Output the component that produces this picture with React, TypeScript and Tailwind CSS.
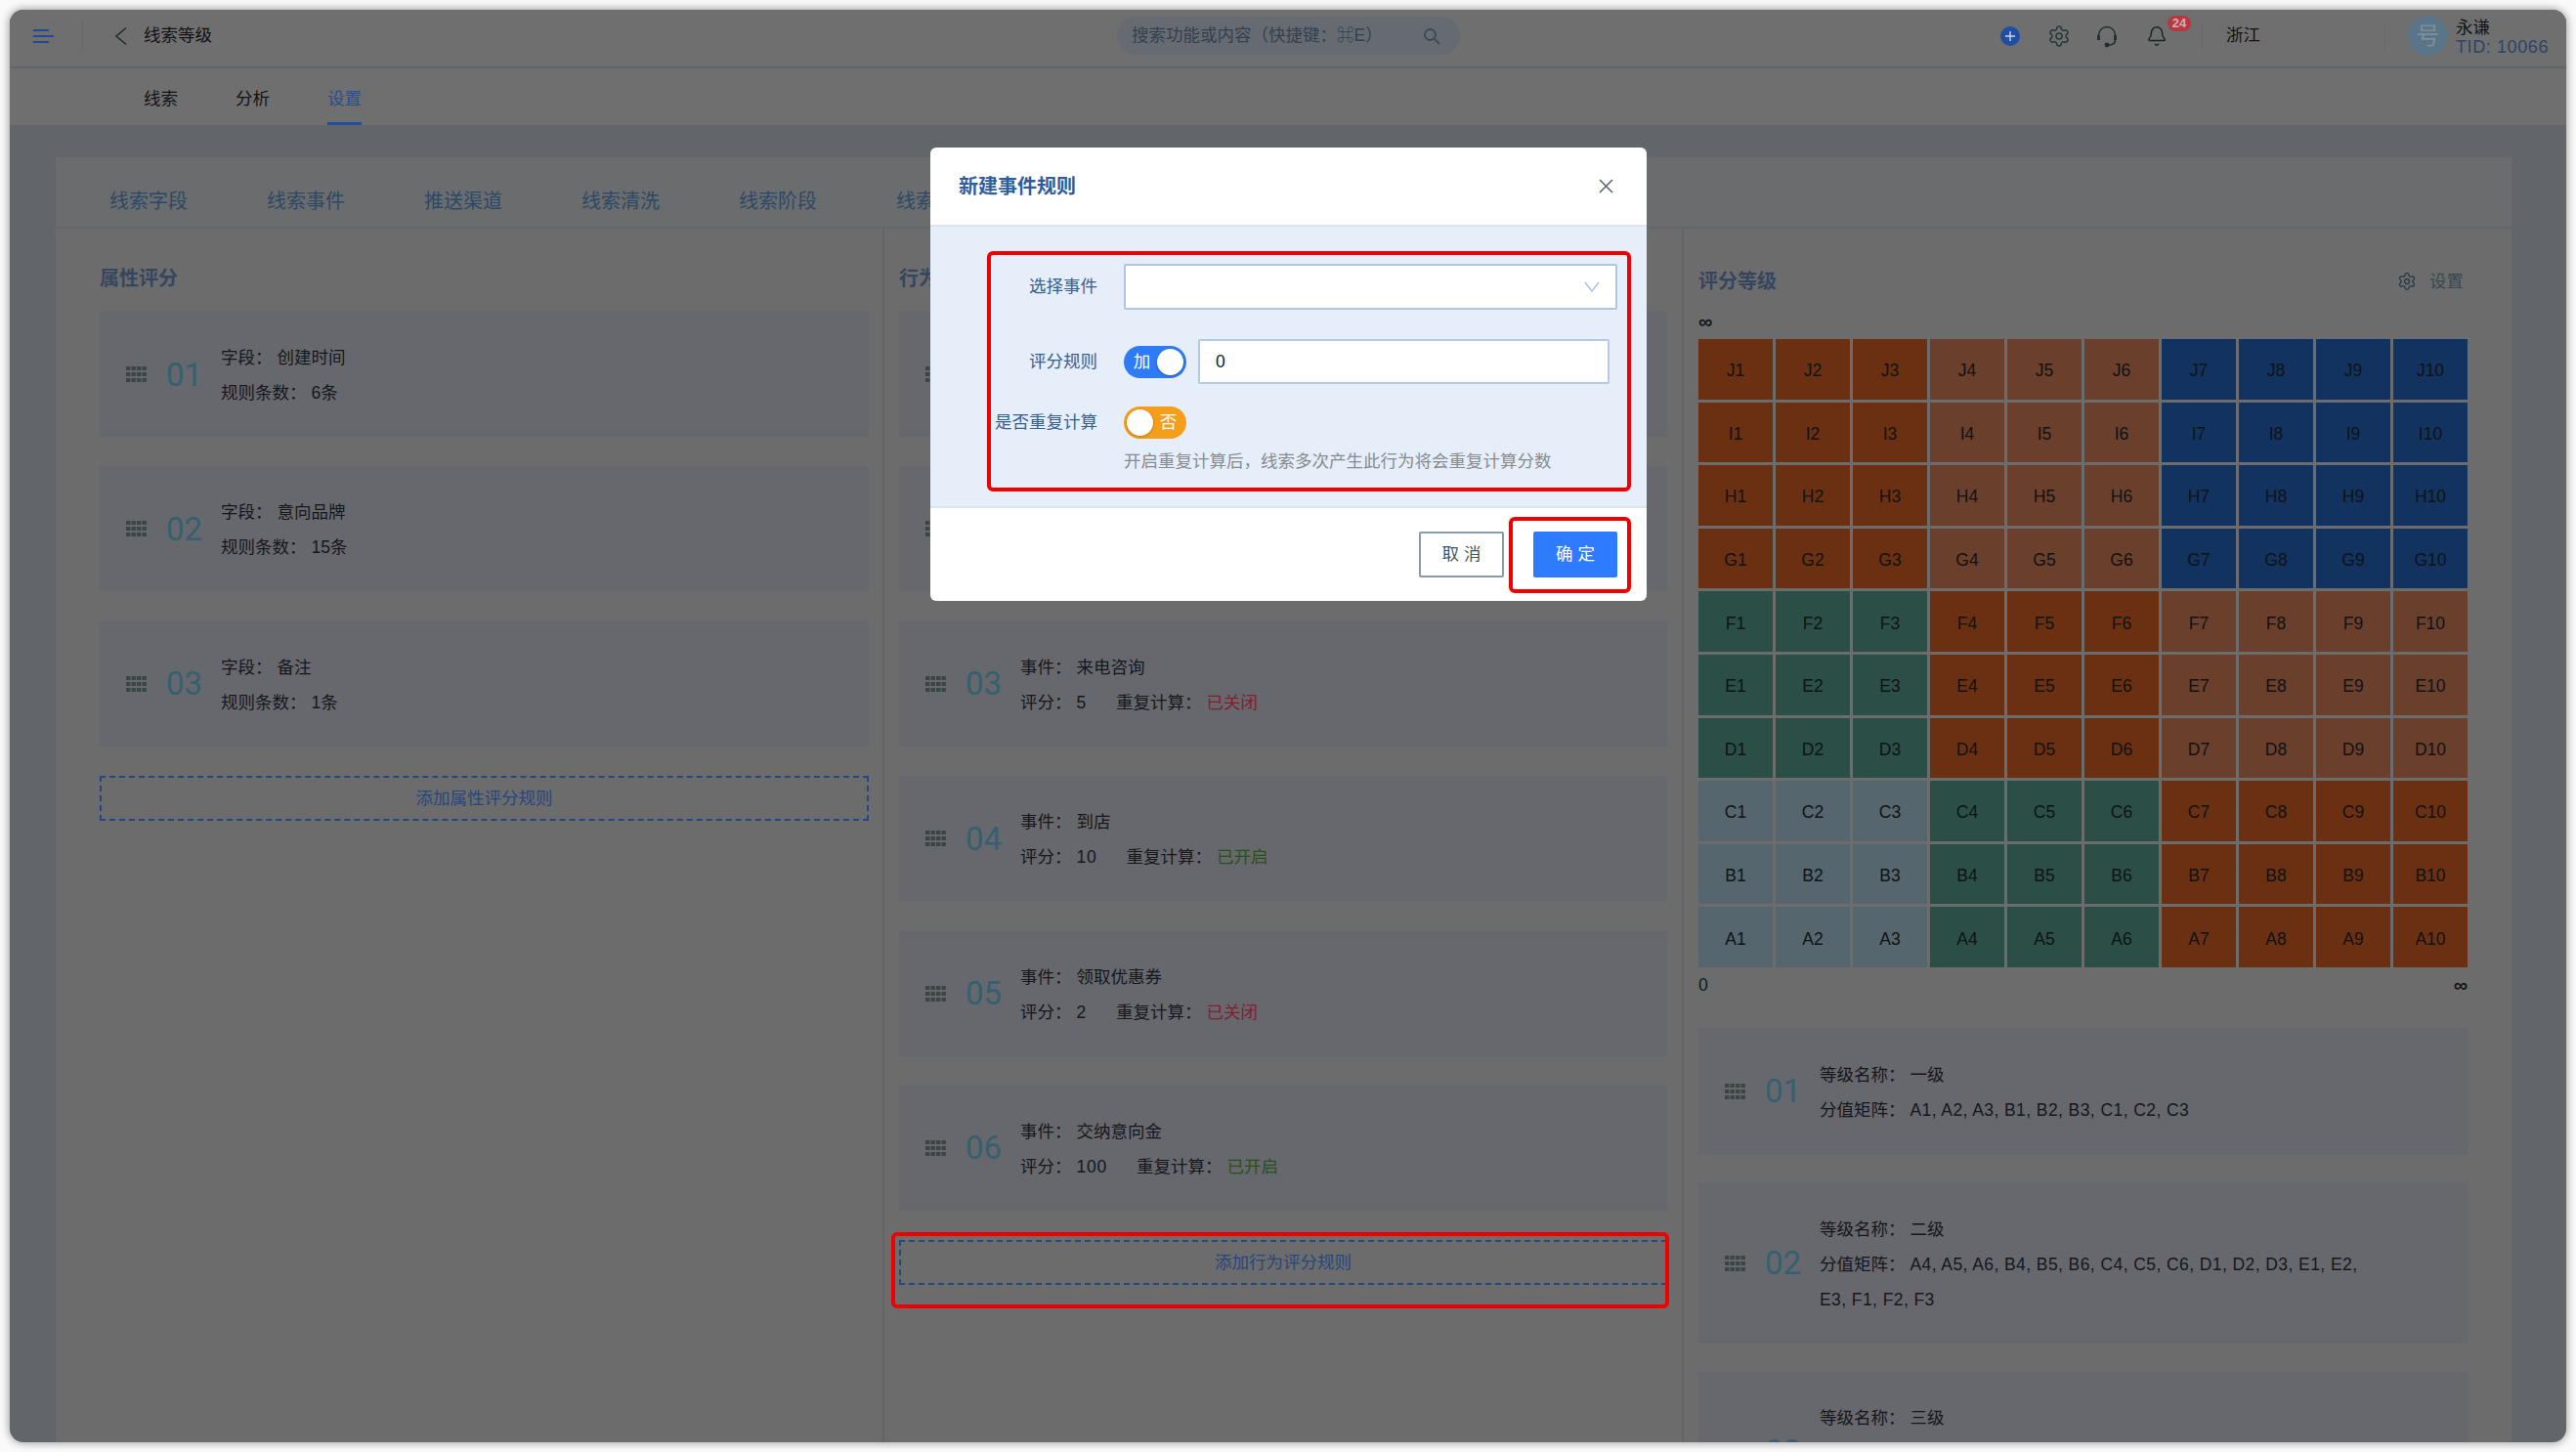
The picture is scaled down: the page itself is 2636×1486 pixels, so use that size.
import { ReactNode } from "react";
import { Bell, Settings } from "lucide-react";

const font = "font-['Liberation_Sans','Noto_Sans_CJK_SC',sans-serif]";

const strong = "bg-[#6b3012]";
const soft = "bg-[#6a3f2c]";
const blue = "bg-[#123360]";
const green = "bg-[#2b4f47]";
const gray = "bg-[#55666f]";

const matrix = [
  { row: "J", colors: [strong, soft, blue] },
  { row: "I", colors: [strong, soft, blue] },
  { row: "H", colors: [strong, soft, blue] },
  { row: "G", colors: [strong, soft, blue] },
  { row: "F", colors: [green, strong, soft] },
  { row: "E", colors: [green, strong, soft] },
  { row: "D", colors: [green, strong, soft] },
  { row: "C", colors: [gray, green, strong] },
  { row: "B", colors: [gray, green, strong] },
  { row: "A", colors: [gray, green, strong] },
];
const columns = [1, 2, 3, 4, 5, 6, 7, 8, 9, 10];

const subTabs = ["线索字段", "线索事件", "推送渠道", "线索清洗", "线索阶段", "线索等级"];

const attrRules = [
  { no: "01", field: "创建时间", count: "6条" },
  { no: "02", field: "意向品牌", count: "15条" },
  { no: "03", field: "备注", count: "1条" },
];

const eventRules = [
  { no: "01", name: "留资", score: "20", on: true },
  { no: "02", name: "预约试驾", score: "10", on: false },
  { no: "03", name: "来电咨询", score: "5", on: false },
  { no: "04", name: "到店", score: "10", on: true },
  { no: "05", name: "领取优惠券", score: "2", on: false },
  { no: "06", name: "交纳意向金", score: "100", on: true },
];

const levels = [
  { no: "01", name: "一级", cells: "A1, A2, A3, B1, B2, B3, C1, C2, C3", height: "h-[130px]" },
  { no: "02", name: "二级", cells: "A4, A5, A6, B4, B5, B6, C4, C5, C6, D1, D2, D3, E1, E2, E3, F1, F2, F3", height: "h-[164px]" },
  { no: "03", name: "三级", cells: "A7, A8, A9, A10, B7, B8, B9, B10, C7, C8, C9, C10, D4, D5, D6, E4", height: "h-[164px]" },
];

function Grip() {
  return (
    <svg width="21" height="16" viewBox="0 0 21 16" className="shrink-0 fill-[#3a4644]">
      {[0, 6, 12].map((y) =>
        [0, 5.5, 11, 16.5].map((x) => <rect key={`${x}-${y}`} x={x} y={y} width="4.4" height="4" />)
      )}
    </svg>
  );
}

function RuleCard({ no, children, className }: { no: string; children: ReactNode; className: string }) {
  return (
    <div className={`flex items-center bg-[#67676e] pl-[27px] ${className}`}>
      <Grip />
      <div className="ml-[20px] w-[36px] shrink-0 font-['Roboto',sans-serif] text-[33px] leading-none font-normal text-[#35606f]">{no}</div>
      <div className="ml-[20px] min-w-0 flex-1 pt-[2px] text-[17.5px] leading-[36px] text-[#15171a]">{children}</div>
    </div>
  );
}

function Line({ label, children }: { label: string; children: ReactNode }) {
  return (
    <span className="mr-[30px] inline">
      <span>{label}：</span>
      <span className="ml-[5px]">{children}</span>
    </span>
  );
}

function AddButton({ label }: { label: string }) {
  return (
    <div className="flex h-[46px] items-center justify-center border-2 border-dashed border-[#25477f] text-[17.5px] text-[#25477f]">
      {label}
    </div>
  );
}

function TopBar() {
  return (
    <header className="flex h-[60px] shrink-0 items-center border-b-2 border-[#5f666c] bg-[#6f6f6f] pb-[5px] pl-[24px] whitespace-nowrap">
      <svg width="21" height="16" viewBox="0 0 21 16" className="shrink-0 stroke-[#24498f]" strokeWidth="2.2">
        <path d="M0 2H16M0 8H21M0 14H16" />
      </svg>
      <div className="ml-[29px] h-[34px] w-px bg-[#666a6d]" />
      <svg width="13" height="20" viewBox="0 0 13 20" fill="none" className="ml-[32px] shrink-0 stroke-[#1f2e30]" strokeWidth="1.6">
        <path d="M12 1.5 2 10l10 8.5" />
      </svg>
      <span className="ml-[17px] text-[17.5px] text-[#111315]">线索等级</span>
      <div className="ml-[926px] flex h-[39px] w-[351px] shrink-0 items-center rounded-full bg-[#666b72] pl-[15px] pr-[20px] text-[17.5px] text-[#33404e]">
        <span>搜索功能或内容（快捷键：⌘E）</span>
        <svg width="18" height="18" viewBox="0 0 18 18" fill="none" className="ml-auto stroke-[#3c4855]" strokeWidth="1.8">
          <circle cx="7.5" cy="7.5" r="5.5" />
          <path d="m12 12 5 5" />
        </svg>
      </div>
      <div className="ml-[553px] flex h-[20px] w-[20px] shrink-0 items-center justify-center rounded-full bg-[#1f4ea3]">
        <svg width="10" height="10" viewBox="0 0 10 10" className="stroke-[#c9d6ea]" strokeWidth="1.4">
          <path d="M5 0v10M0 5h10" />
        </svg>
      </div>
      <Settings size={24} strokeWidth={1.5} className="ml-[28px] shrink-0 text-[#22383a]" />
      <svg width="24" height="24" viewBox="0 0 24 24" fill="none" className="ml-[25px] shrink-0 stroke-[#1f3030]" strokeWidth="1.5">
        <path d="M3.5 16V11a8.5 8.5 0 0 1 17 0v5" />
        <path d="M3.5 11v5M20.5 11v5" strokeWidth="2.8" />
        <path d="M20.5 16c0 3.4-3.4 5-7.5 5" />
        <circle cx="12" cy="21" r="1.7" fill="#1f3030" />
      </svg>
      <div className="relative ml-[28px] shrink-0">
        <Bell size={22} strokeWidth={1.6} className="text-[#162426]" />
        <span className="absolute left-[22px] top-[-10px] flex h-[16px] w-[24px] items-center justify-center rounded-full bg-[#b23a40] text-[13px] font-bold text-[#d9aeb0]">24</span>
      </div>
      <div className="ml-[35px] h-[30px] w-px bg-[#666a6d]" />
      <span className="ml-[24px] text-[17.5px] text-[#111315]">浙江</span>
      <div className="ml-[127px] h-[30px] w-px bg-[#666a6d]" />
      <div className="ml-[23px] flex h-[41px] w-[41px] shrink-0 items-center justify-center rounded-full bg-[#5a7587] text-[24px] text-[#7d8f9b]">号</div>
      <div className="ml-[8px] flex flex-col pt-[3px] leading-[20px]">
        <span className="text-[17.5px] text-[#111315]">永谦</span>
        <span className="text-[18px] tracking-[0.6px] text-[#2d4463]">TID: 10066</span>
      </div>
    </header>
  );
}

function NavTabs() {
  return (
    <nav className="flex h-[60px] shrink-0 items-stretch gap-[59px] border-b-2 border-[#5f666c] bg-[#6f6f6f] pl-[137px] text-[17.5px] text-[#111315]">
      <span className="flex items-center pt-[5px]">线索</span>
      <span className="flex items-center pt-[5px]">分析</span>
      <span className="flex items-center border-b-[3px] border-[#1f4ea3] pt-[8px] text-[#284e93]">设置</span>
    </nav>
  );
}

function Rules() {
  return (
    <div className="flex min-h-0 flex-1">
      <section className="w-[848px] shrink-0 border-r-2 border-[#626568] pl-[45px] pr-[14px]">
        <h2 className="mt-[34px] h-[34px] text-[20px] leading-[34px] font-bold text-[#34465f]">属性评分</h2>
        <div className="mt-[17px] flex flex-col gap-[30.4px]">
          {attrRules.map((r) => (
            <RuleCard key={r.no} no={r.no} className="h-[128px]">
              <div><Line label="字段">{r.field}</Line></div>
              <div><Line label="规则条数">{r.count}</Line></div>
            </RuleCard>
          ))}
          <AddButton label="添加属性评分规则" />
        </div>
      </section>
      <section className="w-[818px] shrink-0 border-r-2 border-[#626568] pl-[15px] pr-[15px]">
        <h2 className="mt-[34px] h-[34px] text-[20px] leading-[34px] font-bold text-[#34465f]">行为评分</h2>
        <div className="mt-[17px] flex flex-col gap-[30.4px]">
          {eventRules.map((r) => (
            <RuleCard key={r.no} no={r.no} className="h-[128px]">
              <div><Line label="事件">{r.name}</Line></div>
              <div>
                <Line label="评分"><span className="tracking-[0.8px]">{r.score}</span></Line>
                <Line label="重复计算">
                  {r.on ? <span className="text-[#27511a]">已开启</span> : <span className="text-[#82202c]">已关闭</span>}
                </Line>
              </div>
            </RuleCard>
          ))}
          <AddButton label="添加行为评分规则" />
        </div>
      </section>
      <section className="min-w-0 flex-1 pl-[15px] pr-[45px]">
        <div className="mt-[37px] flex h-[34px] items-center justify-between pr-[4px]">
          <h2 className="text-[20px] font-bold text-[#34465f]">评分等级</h2>
          <div className="flex items-center gap-[13px] text-[17.5px] text-[#39474c]">
            <Settings size={20} strokeWidth={1.5} className="text-[#22383a]" />
            <span>设置</span>
          </div>
        </div>
        <div className="mt-[14px] h-[21px] text-[20px] leading-[21px] font-bold text-[#15171a]">∞</div>
        <div className="mt-[7px] grid grid-cols-10 gap-[3px]">
          {matrix.map(({ row, colors }) =>
            columns.map((c) => (
              <div
                key={`${row}${c}`}
                className={`flex h-[61.6px] items-center justify-center pt-[3px] text-[17.5px] text-[#101214] ${colors[c <= 3 ? 0 : c <= 6 ? 1 : 2]}`}
              >
                {row}{c}
              </div>
            ))
          )}
        </div>
        <div className="mt-[8px] flex justify-between text-[17.5px] leading-[21px] text-[#15171a]">
          <span>0</span>
          <span className="text-[20px] font-bold">∞</span>
        </div>
        <div className="mt-[33px] flex flex-col gap-[29px]">
          {levels.map((l) => (
            <RuleCard key={l.no} no={l.no} className={`${l.height} pr-[90px]`}>
              <div><Line label="等级名称">{l.name}</Line></div>
              <div><Line label="分值矩阵"><span className="tracking-[0.42px]">{l.cells}</span></Line></div>
            </RuleCard>
          ))}
        </div>
      </section>
    </div>
  );
}

function Toggle({ on, label }: { on: boolean; label: string }) {
  return (
    <div className={`flex h-[33px] w-[64px] shrink-0 items-center rounded-full px-[3px] text-[17.5px] text-white ${on ? "bg-[#2f7bf6]" : "flex-row-reverse bg-[#f59e1b]"}`}>
      <span className="flex-1 text-center">{label}</span>
      <span className="h-[27px] w-[27px] rounded-full bg-white shadow-[0_1px_3px_rgba(0,0,0,0.25)]" />
    </div>
  );
}

function Dialog() {
  return (
    <div className="absolute left-[942px] top-[141px] flex h-[464px] w-[733px] flex-col overflow-hidden rounded-[6px] bg-white text-[17.5px]">
      <div className="flex h-[81px] shrink-0 items-center justify-between border-b-2 border-[#dbe5f1] pl-[29px] pr-[34px]">
        <span className="text-[20px] font-bold text-[#2f5c9c]">新建事件规则</span>
        <svg width="15" height="15" viewBox="0 0 15 15" className="stroke-[#56606a]" strokeWidth="1.5">
          <path d="m1 1 13 13M14 1 1 14" />
        </svg>
      </div>
      <div className="h-[288px] shrink-0 border-b-2 border-[#dbe5f1] bg-[#e6eef9] pl-[66px] pt-[37px]">
        <div className="flex h-[48px] items-center">
          <label className="w-[132px] pr-[27px] text-right text-[#35608f]">选择事件</label>
          <div className="flex h-[47px] w-[505px] items-center justify-end rounded-[2px] border-2 border-[#afc6e0] bg-white pr-[16px]">
            <svg width="16" height="11" viewBox="0 0 16 11" fill="none" className="stroke-[#a9c0de]" strokeWidth="1.4">
              <path d="m1 1 7 9 7-9" />
            </svg>
          </div>
        </div>
        <div className="mt-[30px] flex h-[46px] items-center">
          <label className="w-[132px] pr-[27px] text-right text-[#35608f]">评分规则</label>
          <Toggle on label="加" />
          <div className="ml-[12px] flex h-[46px] w-[421px] items-center rounded-[2px] border-2 border-[#b4cae2] bg-white pl-[16px] text-[#15171a]">0</div>
        </div>
        <div className="mt-[23px] flex h-[33px] items-center">
          <label className="w-[132px] whitespace-nowrap pr-[27px] text-right text-[#35608f]">是否重复计算</label>
          <Toggle on={false} label="否" />
        </div>
        <p className="ml-[132px] mt-[11px] text-[17.5px] leading-[24px] text-[#878b90]">开启重复计算后，线索多次产生此行为将会重复计算分数</p>
      </div>
      <div className="flex flex-1 items-center justify-end gap-[30px] pr-[30px]">
        <button className="h-[47px] w-[87px] rounded-[2px] border-2 border-[#8b9ba6] text-[17.5px] text-[#3d5560]">取 消</button>
        <button className="h-[47px] w-[86px] rounded-[2px] bg-[#2f7bff] text-[17.5px] text-white">确 定</button>
      </div>
    </div>
  );
}

export default function App() {
  return (
    <div className={`h-[1486px] w-[2636px] bg-[#fafafa] p-[10px] ${font}`}>
      <div className="relative flex h-[1466px] w-[2616px] flex-col overflow-hidden rounded-[14px] bg-[#62666b] shadow-[0_0_10px_rgba(0,0,0,0.45)]">
        <TopBar />
        <NavTabs />
        <main className="ml-[47px] mr-[56px] mt-[31px] flex min-h-0 flex-1 flex-col overflow-hidden bg-[#6c6c6c]">
          <div className="flex h-[73px] shrink-0 items-center gap-[81px] border-b-2 border-[#63676b] bg-[#6b6c6d] pl-[55px] pt-[18px] text-[20px] text-[#2c4868]">
            {subTabs.map((t) => <span key={t}>{t}</span>)}
          </div>
          <Rules />
        </main>
        <Dialog />
        <div className="absolute left-[1000px] top-[247px] h-[246px] w-[659px] rounded-[6px] border-[4px] border-[#f00000]" />
        <div className="absolute left-[1534px] top-[519px] h-[78px] w-[125px] rounded-[6px] border-[4px] border-[#f00000]" />
        <div className="absolute left-[902px] top-[1251px] h-[78px] w-[796px] rounded-[6px] border-[4px] border-[#f00000]" />
      </div>
    </div>
  );
}
